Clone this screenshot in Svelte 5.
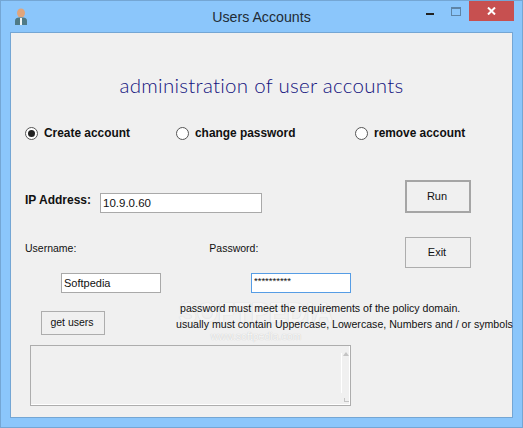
<script>
	let mode = 'create';
	const modes = [
		{ id: 'create', label: 'Create account' },
		{ id: 'change', label: 'change password' },
		{ id: 'remove', label: 'remove account' }
	];
	let ip = '10.9.0.60';
	let username = 'Softpedia';
	let password = '**********';
</script>

<div class="window">
	<header class="titlebar">
		<svg class="appicon" width="14" height="18" viewBox="0 0 14 18">
			<ellipse cx="7" cy="5" rx="4" ry="4.6" fill="#e0a57c"/>
			<path d="M1 17 V12.5 C1 10.5 3 9.5 5 9.5 H9 C11 9.5 13 10.5 13 12.5 V17 Z" fill="#4f7a86"/>
			<path d="M6 10 H8 V17 H6 Z" fill="#eef4f4"/>
		</svg>
		<span class="title">Users Accounts</span>
		<div class="controls">
			<span class="min"></span>
			<span class="max"></span>
			<span class="close">
				<svg width="9" height="8" viewBox="0 0 9 8"><path d="M1 0.5 L8 7.5 M8 0.5 L1 7.5" stroke="#fff" stroke-width="2"/></svg>
			</span>
		</div>
	</header>

	<main class="client">
		<!-- softpedia stamp sits under the form text -->
		<div class="watermark">
			<span class="brand">SOFTPEDIA</span>
			<span class="url">www.softpedia.com</span>
		</div>

		<h1>administration of user accounts</h1>

		<div class="radios">
			{#each modes as m}
				<label class="radio">
					<input type="radio" bind:group={mode} value={m.id}/>
					<span class="dot"></span>
					{m.label}
				</label>
			{/each}
		</div>

		<div class="middle">
			<div class="fields">
				<div class="iprow">
					<label for="ip">IP Address:</label>
					<input id="ip" class="box ipbox" bind:value={ip}/>
				</div>
				<div class="labels">
					<span>Username:</span>
					<span>Password:</span>
				</div>
				<div class="inputs">
					<input class="box userbox" bind:value={username}/>
					<input class="box passbox" bind:value={password}/>
				</div>
			</div>
			<div class="actions">
				<button class="run">Run</button>
				<button class="exit">Exit</button>
			</div>
		</div>

		<div class="hintrow">
			<button class="getusers">get users</button>
			<p class="hint">
				<span class="first">password must meet the requirements of the policy domain.</span>
				<span>usually must contain Uppercase, Lowercase, Numbers and / or symbols</span>
			</p>
		</div>

		<div class="logbox">
			<div class="scroll">
				<span class="up"></span>
				<span class="track"></span>
				<span class="grip"></span>
			</div>
		</div>
	</main>
</div>

<style>
	:global(body) {
		margin: 0;
		background: #8bc6fb;
	}
	.window {
		width: 523px;
		height: 428px;
		box-sizing: border-box;
		background: #8bc6fb;
		border: 1px solid #74a6d4;
		display: flex;
		flex-direction: column;
		font-family: "Liberation Sans", Arial, sans-serif;
		font-size: 11px;
		color: #111;
		overflow: hidden;
	}
	.titlebar {
		height: 31px;
		flex: none;
		display: flex;
		align-items: center;
		position: relative;
		padding-left: 13px;
	}
	.appicon {
		flex: none;
	}
	.title {
		position: absolute;
		left: 0;
		right: 0;
		text-align: center;
		font-size: 14.2px;
		color: #222c36;
	}
	.controls {
		position: absolute;
		top: 0;
		right: 8px;
		display: flex;
		align-items: flex-start;
	}
	.min {
		width: 8px;
		height: 2px;
		background: #222;
		margin: 12px 17px 0 0;
	}
	.max {
		width: 8px;
		height: 6px;
		border: 1px solid #5e84a6;
		border-top-width: 2px;
		margin: 6px 8px 0 0;
	}
	.close {
		width: 45px;
		height: 20px;
		background: #c75050;
		display: flex;
		align-items: center;
		justify-content: center;
	}
	.client {
		position: relative;
		margin: 0 9px 0 9px;
		height: 386px;
		flex: none;
		box-sizing: border-box;
		background: #f0f0f0;
		border: 1px solid #74a6d4;
	}
	h1 {
		margin: 0;
		padding-top: 39px;
		height: 66px;
		text-align: center;
		font-family: Lato, "Open Sans", sans-serif;
		font-weight: 300;
		font-size: 20.5px;
		line-height: 26px;
		color: #12127e;
		letter-spacing: 0.27px;
	}
	.radios {
		display: grid;
		grid-template-columns: 151px 179px 1fr;
		padding-left: 14px;
		height: 16px;
		margin-top: -13px;
	}
	.radio {
		display: flex;
		align-items: center;
		gap: 6px;
		font-weight: 700;
		font-size: 11.9px;
	}
	.radio input {
		display: none;
	}
	.dot {
		width: 11px;
		height: 11px;
		border: 1px solid #555;
		border-radius: 50%;
		background: #fff;
		position: relative;
		flex: none;
	}
	.radio input:checked + .dot::after {
		content: "";
		position: absolute;
		inset: 2px;
		border-radius: 50%;
		background: #222;
	}
	.middle {
		display: flex;
		justify-content: space-between;
		padding: 39px 41px 0 14px;
	}
	.iprow {
		display: flex;
		align-items: center;
		gap: 9px;
		padding-top: 13px;
	}
	.iprow label {
		font-weight: 700;
		font-size: 12px;
		margin-bottom: 6px;
	}
	.box {
		box-sizing: border-box;
		height: 20px;
		border: 1px solid #a9a9a9;
		background: #fff;
		font: inherit;
		color: #111;
		padding: 0 2px;
		outline: none;
		border-radius: 0;
	}
	.ipbox {
		width: 162px;
		font-size: 11.5px;
	}
	.labels {
		display: flex;
		gap: 133px;
		padding-top: 28px;
		line-height: 14px;
		font-size: 10.5px;
	}
	.inputs {
		display: flex;
		padding: 18px 0 0 36px;
		gap: 90px;
	}
	.userbox {
		width: 100px;
	}
	.passbox {
		width: 100px;
		border-color: #569de5;
		font-size: 9.5px;
		padding-bottom: 5px;
	}
	.actions {
		display: flex;
		flex-direction: column;
		gap: 24px;
	}
	button {
		box-sizing: border-box;
		width: 66px;
		background: #f0f0f0;
		border: 1px solid #adadad;
		font: inherit;
		color: #111;
		padding: 0 2px 2px 0;
		border-radius: 0;
	}
	.run {
		height: 33px;
		border: 2px solid #a5a5a5;
	}
	.exit {
		height: 31px;
	}
	.hintrow {
		display: flex;
		padding: 11px 0 0 30px;
		position: relative;
	}
	.getusers {
		width: 64px;
		height: 24px;
		margin-top: 7px;
		flex: none;
		font-size: 10.5px;
	}
	.hint {
		margin: -4px 0 0 71px;
		line-height: 16px;
		white-space: nowrap;
		font-size: 10.6px;
	}
	.hint span {
		display: block;
	}
	.hint .first {
		padding-left: 4px;
	}
	.logbox {
		position: relative;
		box-sizing: border-box;
		width: 321px;
		height: 61px;
		margin: 10px 0 0 19px;
		border: 1px solid #adadad;
		background: #f0f0f0;
		box-shadow: inset -1px -1px 0 #fff;
	}
	.scroll {
		position: absolute;
		top: 6px;
		right: 1px;
		bottom: 2px;
		width: 8px;
	}
	.up {
		position: absolute;
		top: 0;
		right: 0;
		border-left: 3px solid transparent;
		border-right: 3px solid transparent;
		border-bottom: 4px solid #c4c4c4;
	}
	.track {
		position: absolute;
		top: 1px;
		bottom: 10px;
		left: 0;
		width: 1px;
		background: #fff;
	}
	.grip {
		position: absolute;
		right: 0;
		bottom: 1px;
		width: 4px;
		height: 3px;
		border-left: 1px solid #c4c4c4;
		border-bottom: 1px solid #c4c4c4;
	}
	.watermark {
		position: absolute;
		left: 170px;
		top: 264px;
		width: 150px;
		display: flex;
		flex-direction: column;
		align-items: center;
		pointer-events: none;
		color: #f8f8f8;
		text-shadow: 0 0 1px #b8b8b8;
	}
	.brand {
		font-size: 27px;
		line-height: 32px;
		font-weight: 700;
		opacity: 0.6;
	}
	.url {
		font-size: 10.5px;
		line-height: 12px;
		margin-top: 1px;
	}
</style>
